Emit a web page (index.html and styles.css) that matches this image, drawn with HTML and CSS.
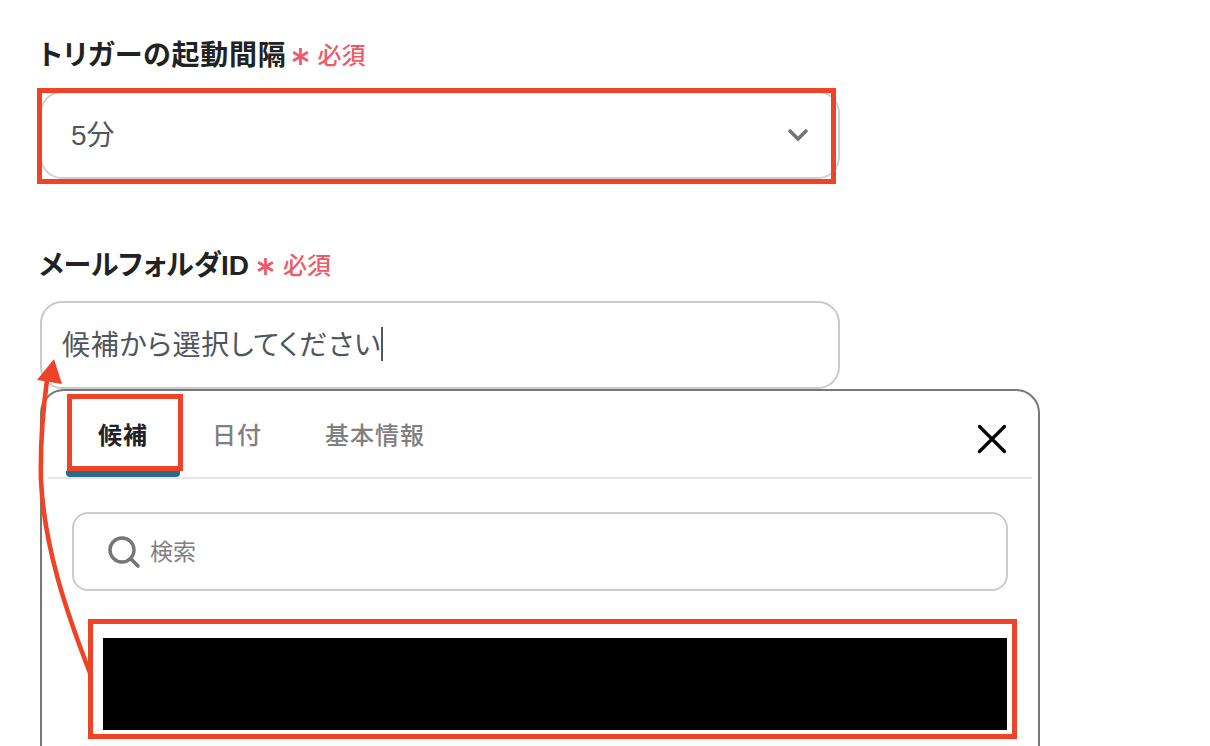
FILE: index.html
```html
<!DOCTYPE html>
<html lang="ja">
<head>
    <meta charset="UTF-8">
    <title>トリガーの設定</title>
    <link rel="stylesheet" href="styles.css">
</head>
<body>
    <div class="page">
        <div class="field first">
            <div class="field-label">
                <span class="label-text spaced">トリガーの起動間隔</span>
                <span class="required">
                    <svg class="mark" width="19" height="19" viewBox="0 0 18 18"><path d="M9 1v16M2 5l14 8M16 5L2 13" fill="none" stroke="#ee5a68" stroke-width="2.6"/></svg>
                    必須
                </span>
            </div>
            <div class="input select-box">
                <span class="value">5分</span>
                <svg class="chevron" width="22" height="14" viewBox="0 0 22 14"><path d="M2 2l9 9 9-9" fill="none" stroke="#757575" stroke-width="3.6"/></svg>
            </div>
        </div>

        <div class="field second">
            <div class="field-label">
                <span class="label-text">メールフォルダID</span>
                <span class="required">
                    <svg class="mark" width="19" height="19" viewBox="0 0 18 18"><path d="M9 1v16M2 5l14 8M16 5L2 13" fill="none" stroke="#ee5a68" stroke-width="2.6"/></svg>
                    必須
                </span>
            </div>
            <div class="input text-box">
                <span class="value spaced">候補から選択してください</span><span class="caret"></span>
            </div>
        </div>

        <div class="popup">
            <div class="tabs">
                <div class="tab active">候補</div>
                <div class="tab date">日付</div>
                <div class="tab info">基本情報</div>
                <svg class="close" width="30" height="30" viewBox="0 0 30 30"><path d="M2.5 2.5l25 25M27.5 2.5l-25 25" fill="none" stroke="#000" stroke-width="3.2" stroke-linecap="round"/></svg>
            </div>
            <div class="search">
                <svg width="34" height="34" viewBox="0 0 34 34"><circle cx="15" cy="15" r="12" fill="none" stroke="#757575" stroke-width="3.4"/><path d="M24 24l7 7" stroke="#757575" stroke-width="3.6" stroke-linecap="round"/></svg>
                <span class="search-text">検索</span>
            </div>
            <div class="result"></div>
        </div>

        <div class="mark-box box-select"></div>
        <div class="mark-box box-tab"></div>
        <div class="mark-box box-result"></div>
        <svg class="arrow" width="120" height="340" viewBox="0 0 120 340">
            <path d="M90 317C66 255 44 190 41 124C40 84 43 54 47 24" fill="none" stroke="#ee4327" stroke-width="4.6"/>
            <path d="M54 3L37 24L62 28Z" fill="#ee4327"/>
        </svg>
    </div>
</body>
</html>
```

FILE: styles.css
```css
html, body {
    margin: 0;
    padding: 0;
    background: #fff;
}
body {
    font-family: "Liberation Sans", "Noto Sans CJK JP", sans-serif;
    overflow: hidden;
}
.page {
    position: relative;
    width: 1210px;
    height: 746px;
    padding-left: 40px;
    box-sizing: border-box;
    overflow: hidden;
}
.field {
    width: 800px;
}
.first {
    padding-top: 36px;
}
.second {
    padding-top: 67px;
}
.field-label {
    display: flex;
    align-items: center;
    height: 34px;
    margin-bottom: 21px;
}
.label-text {
    margin-left: -1px;
    font-size: 28px;
    font-weight: 700;
    font-feature-settings: "palt";
    color: #222;
}
.spaced {
    letter-spacing: 0.75px;
}
.required {
    display: flex;
    align-items: center;
    margin-left: 7px;
    font-size: 24px;
    font-weight: 500;
    color: #ee5a68;
}
.first .required {
    margin-left: 4px;
}
.mark {
    margin-top: 7px;
    margin-right: 8px;
}
.input {
    display: flex;
    align-items: center;
    height: 88px;
    box-sizing: border-box;
    border: 2px solid #cdd0d3;
    border-radius: 22px;
    font-size: 28px;
    font-feature-settings: "palt";
    color: #50565e;
}
.value {
    margin-bottom: 5px;
}
.select-box {
    justify-content: space-between;
    padding: 0 29px;
}
.text-box {
    padding: 0 20px;
    border-color: #c9c9c9;
}
.caret {
    width: 2px;
    height: 34px;
    margin-bottom: 3px;
    background: #50565e;
}
.popup {
    width: 1000px;
    height: 420px;
    box-sizing: border-box;
    border: 2px solid #777;
    border-radius: 24px;
    background: #fff;
}
.tabs {
    display: flex;
    align-items: flex-start;
    position: relative;
    height: 86px;
    margin: 0 6px;
    border-bottom: 2px solid #e5e5e5;
}
.tab {
    margin-top: 28px;
    font-size: 24px;
    line-height: 34px;
    font-weight: 500;
    color: #808080;
    letter-spacing: 1px;
}
.tab.active {
    width: 114px;
    height: 52px;
    margin-left: 18px;
    border-bottom: 6px solid #2d6a8a;
    border-radius: 0 0 4px 4px;
    color: #222;
    font-weight: 700;
    text-align: center;
}
.tab.date {
    margin-left: 32px;
}
.tab.info {
    margin-left: 63px;
}
.close {
    margin-left: auto;
    margin-top: 33px;
    margin-right: 25px;
}
.search {
    display: flex;
    align-items: center;
    gap: 9px;
    height: 79px;
    box-sizing: border-box;
    margin: 33px 30px 0;
    padding-left: 33px;
    border: 2px solid #ccc;
    border-radius: 16px;
    font-size: 23px;
    color: #808080;
}
.search-text {
    margin-bottom: 3px;
}
.result {
    height: 92px;
    margin: 47px 31px 0 61px;
    background: #000;
}
.mark-box {
    position: absolute;
    box-sizing: border-box;
    border: 5px solid #ee4327;
}
.box-select {
    left: 37px;
    top: 88px;
    width: 799px;
    height: 96px;
}
.box-tab {
    left: 67px;
    top: 394px;
    width: 116px;
    height: 77px;
}
.box-result {
    left: 88px;
    top: 619px;
    width: 929px;
    height: 120px;
}
.arrow {
    position: absolute;
    left: 0;
    top: 356px;
}
```
